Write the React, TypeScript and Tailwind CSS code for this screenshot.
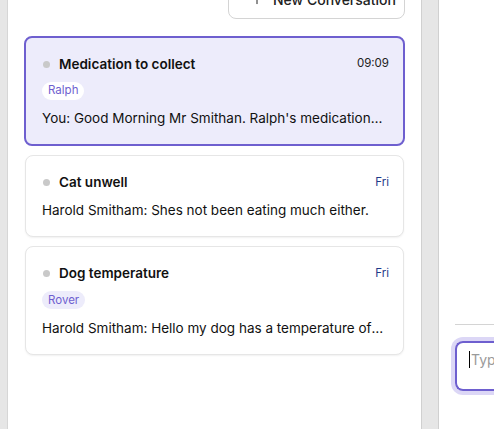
import { Plus } from "lucide-react";

type Conversation = {
  title: string;
  time: string;
  pet?: string;
  preview: string;
  selected?: boolean;
};

const conversations: Conversation[] = [
  {
    title: "Medication to collect",
    time: "09:09",
    pet: "Ralph",
    preview: "You: Good Morning Mr Smithan. Ralph's medication is ready to collect from reception",
    selected: true,
  },
  {
    title: "Cat unwell",
    time: "Fri",
    preview: "Harold Smitham: Shes not been eating much either.",
  },
  {
    title: "Dog temperature",
    time: "Fri",
    pet: "Rover",
    preview: "Harold Smitham: Hello my dog has a temperature of 40 degrees and is shaking",
  },
];

function ConversationCard({ c }: { c: Conversation }) {
  const box = c.selected
    ? "border-2 border-[#6e5fcf] bg-[#edecfb] pl-4 pr-[14px] py-4"
    : "mx-px border border-[#e6e6e6] bg-white pl-4 pr-[14px] py-4 shadow-[0_1px_2px_rgba(0,0,0,0.06)]";

  return (
    <div className={`rounded-[8px] ${box}`}>
      <div className="flex h-5 items-center">
        <span className="ml-px h-[7px] w-[7px] rounded-full bg-[#c9c9c9]" />
        <p className="ml-[9px] text-[13.5px] font-semibold text-[#111]">{c.title}</p>
        <span className={`ml-auto text-[11.5px] ${c.selected ? "text-[#222]" : "text-[#1e3a8a]"}`}>
          {c.time}
        </span>
      </div>
      {c.pet && (
        <span
          className={`mt-2 inline-flex h-[18px] items-center rounded-full px-[6px] text-[11.5px] text-[#6f5fd0] ${
            c.selected ? "bg-white" : "bg-[#edecfb]"
          }`}
        >
          {c.pet}
        </span>
      )}
      <p className="mt-2 h-5 truncate pr-[4px] text-[13.5px] leading-5 text-[#111]">{c.preview}</p>
    </div>
  );
}

export default function App() {
  return (
    <div
      className="flex h-[429px] w-[494px] overflow-hidden bg-white"
      style={{ fontFamily: "Inter, 'Noto Sans', sans-serif" }}
    >
      <div className="w-[8px] shrink-0 border-r border-[#d6d6d6] bg-[#e6e6e6]" />

      <div className="w-[413px] shrink-0 bg-white px-4">
        <div className="-mt-[21px] flex justify-end">
          <button className="flex h-10 w-[177px] items-center gap-2 rounded-[8px] border border-[#d4d4d4] bg-white pl-[20px] text-[14px] font-medium text-[#222]">
            <Plus size={16} strokeWidth={1.5} />
            New Conversation
          </button>
        </div>
        <div className="mt-[17px] flex flex-col gap-[9px]">
          {conversations.map((c) => (
            <ConversationCard key={c.title} c={c} />
          ))}
        </div>
      </div>

      <div className="w-[18px] shrink-0 border-x border-[#d0d0d0] bg-[#e6e6e6]" />

      <div className="flex min-w-0 flex-1 flex-col pl-4">
        <div className="mt-[324px] h-px bg-[#d4d4d4]" />
        <div className="mt-4 h-[50px] overflow-hidden whitespace-nowrap rounded-l-[8px] border-2 border-r-0 border-[#6e5fcf] pl-3 pt-[4px] ring-[4px] ring-[#dcd7f6]">
          <span className="border-l border-black pl-px text-[14px] text-[#9a9a9a]">Type a message</span>
        </div>
      </div>
    </div>
  );
}
